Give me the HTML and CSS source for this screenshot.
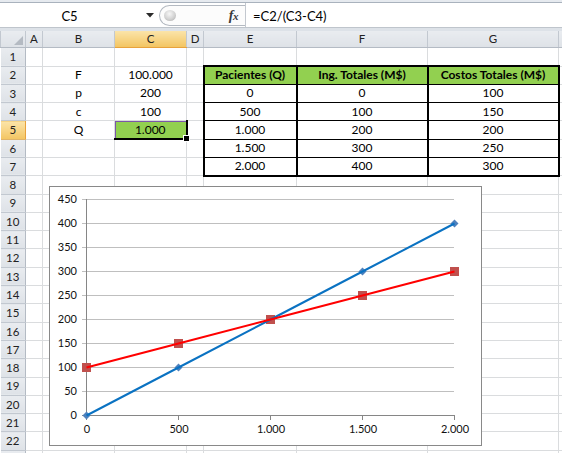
FILE: index.html
```html
<!DOCTYPE html>
<html lang="es">
<head>
<meta charset="utf-8">
<title>Punto de equilibrio</title>
<link rel="stylesheet" href="styles.css">
</head>
<body>
<div class="ribbon-edge"></div>
<div class="fbar">
  <div class="namebox">
    <span class="ref">C5</span>
    <svg class="dd" width="8" height="5" viewBox="0 0 8 5"><path d="M0 0H8L4 4.5Z" fill="#2b2b2b"/></svg>
  </div>
  <div class="fxzone">
    <span class="knob"></span>
    <span class="fx">f<span class="fxx">x</span></span>
  </div>
  <div class="formula">=C2/(C3-C4)</div>
</div>
<div class="gap"></div>

<table class="grid">
  <colgroup>
    <col class="w-rh"><col class="w-a"><col class="w-b"><col class="w-b"><col class="w-a"><col class="w-e"><col class="w-f"><col class="w-f"><col class="w-h">
  </colgroup>
  <thead>
    <tr class="hrow">
      <th class="corner"><svg width="9" height="9" viewBox="0 0 9 9"><path d="M9 0V9H0Z" fill="#b4bac2"/></svg></th>
      <th>A</th><th>B</th><th class="hl">C</th><th>D</th><th>E</th><th>F</th><th>G</th><th></th>
    </tr>
  </thead>
  <tbody>
    <tr><th>1</th><td></td><td></td><td></td><td></td><td></td><td></td><td></td><td></td></tr>
    <tr><th>2</th><td></td><td>F</td><td>100.000</td><td></td><td class="t top hd">Pacientes (Q)</td><td class="t top hd">Ing. Totales (M$)</td><td class="t top hd">Costos Totales (M$)</td><td></td></tr>
    <tr><th>3</th><td></td><td>p</td><td>200</td><td></td><td class="t">0</td><td class="t">0</td><td class="t">100</td><td></td></tr>
    <tr><th>4</th><td></td><td>c</td><td>100</td><td></td><td class="t">500</td><td class="t">100</td><td class="t">150</td><td></td></tr>
    <tr><th class="hl">5</th><td></td><td>Q</td><td class="sel">1.000<span class="handle"></span></td><td></td><td class="t">1.000</td><td class="t">200</td><td class="t">200</td><td></td></tr>
    <tr><th>6</th><td></td><td></td><td></td><td></td><td class="t">1.500</td><td class="t">300</td><td class="t">250</td><td></td></tr>
    <tr><th>7</th><td></td><td></td><td></td><td></td><td class="t bot">2.000</td><td class="t bot">400</td><td class="t bot">300</td><td></td></tr>
    <tr><th>8</th><td></td><td></td><td></td><td></td><td></td><td></td><td></td><td></td></tr>
    <tr><th>9</th><td></td><td></td><td></td><td></td><td></td><td></td><td></td><td></td></tr>
    <tr><th>10</th><td></td><td></td><td></td><td></td><td></td><td></td><td></td><td></td></tr>
    <tr><th>11</th><td></td><td></td><td></td><td></td><td></td><td></td><td></td><td></td></tr>
    <tr><th>12</th><td></td><td></td><td></td><td></td><td></td><td></td><td></td><td></td></tr>
    <tr><th>13</th><td></td><td></td><td></td><td></td><td></td><td></td><td></td><td></td></tr>
    <tr><th>14</th><td></td><td></td><td></td><td></td><td></td><td></td><td></td><td></td></tr>
    <tr><th>15</th><td></td><td></td><td></td><td></td><td></td><td></td><td></td><td></td></tr>
    <tr><th>16</th><td></td><td></td><td></td><td></td><td></td><td></td><td></td><td></td></tr>
    <tr><th>17</th><td></td><td></td><td></td><td></td><td></td><td></td><td></td><td></td></tr>
    <tr><th>18</th><td></td><td></td><td></td><td></td><td></td><td></td><td></td><td></td></tr>
    <tr><th>19</th><td></td><td></td><td></td><td></td><td></td><td></td><td></td><td></td></tr>
    <tr><th>20</th><td></td><td></td><td></td><td></td><td></td><td></td><td></td><td></td></tr>
    <tr><th>21</th><td></td><td></td><td></td><td></td><td></td><td></td><td></td><td></td></tr>
    <tr><th>22</th><td></td><td></td><td></td><td></td><td></td><td></td><td></td><td></td></tr>
    <tr><th></th><td></td><td></td><td></td><td></td><td></td><td></td><td></td><td></td></tr>
  </tbody>
</table>

<div class="chart">
  <svg width="431" height="258" viewBox="0 0 431 258">
    <g class="grid-lines" stroke="#bfbfbf" stroke-width="1">
      <path d="M32 12.5H404M32 36.5H404M32 60.5H404M32 84.5H404M32 108.5H404M32 132.5H404M32 156.5H404M32 180.5H404M32 204.5H404"/>
    </g>
    <g stroke="#868686" stroke-width="1">
      <path d="M36.5 12V229M32 228.5H404.5"/>
      <path d="M32 228.5H36M36.5 228V233M128.5 228V233M220.5 228V233M312.5 228V233M404.5 228V233"/>
    </g>
    <g class="ylab" text-anchor="end">
      <text x="27" y="16">450</text>
      <text x="27" y="40">400</text>
      <text x="27" y="64">350</text>
      <text x="27" y="88">300</text>
      <text x="27" y="112">250</text>
      <text x="27" y="136">200</text>
      <text x="27" y="160">150</text>
      <text x="27" y="184">100</text>
      <text x="27" y="208">50</text>
      <text x="27" y="232">0</text>
    </g>
    <g class="xlab" text-anchor="middle">
      <text x="37" y="246">0</text>
      <text x="129" y="246">500</text>
      <text x="221" y="246">1.000</text>
      <text x="313" y="246">1.500</text>
      <text x="405" y="246">2.000</text>
    </g>
    <g fill="#4f81bd">
      <path d="M36.5 224.5L40.5 228.5L36.5 232.5L32.5 228.5Z"/>
      <path d="M128.5 176.5L132.5 180.5L128.5 184.5L124.5 180.5Z"/>
      <path d="M220.5 128.5L224.5 132.5L220.5 136.5L216.5 132.5Z"/>
      <path d="M312.5 80.5L316.5 84.5L312.5 88.5L308.5 84.5Z"/>
      <path d="M404.5 32.5L408.5 36.5L404.5 40.5L400.5 36.5Z"/>
    </g>
    <g fill="#c0504d">
      <rect x="32" y="176" width="9" height="9"/>
      <rect x="124" y="152" width="9" height="9"/>
      <rect x="216" y="128" width="9" height="9"/>
      <rect x="308" y="104" width="9" height="9"/>
      <rect x="400" y="80" width="9" height="9"/>
    </g>
    <polyline points="36.5,228.5 128.5,180.5 220.5,132.5 312.5,84.5 404.5,36.5" fill="none" stroke="#0a72c2" stroke-width="2"/>
    <polyline points="36.5,180.5 128.5,156.5 220.5,132.5 312.5,108.5 404.5,84.5" fill="none" stroke="#ff0000" stroke-width="2"/>
  </svg>
</div>
</body>
</html>
```

FILE: styles.css
```css
html, body {
  margin: 0;
  height: 453px;
  overflow: hidden;
  background: #ffffff;
}
body {
  position: relative;
  width: 562px;
  font-family: Lato, "Liberation Sans", sans-serif;
  color: #000;
}

.ribbon-edge {
  height: 2px;
  background: #e6eaef;
  border-bottom: 1px solid #a9b2bd;
}

.fbar {
  display: flex;
  height: 25px;
  box-sizing: border-box;
  background: #ffffff;
  border-bottom: 1px solid #bfc5cc;
}
.namebox {
  width: 159px;
  display: flex;
  align-items: center;
}
.namebox .ref {
  width: 139px;
  text-align: center;
  font-size: 13px;
  padding-top: 1px;
}
.dd {
  margin-left: 7px;
  margin-top: 1px;
}
.fxzone {
  width: 86px;
  box-sizing: border-box;
  margin: 2px 0 1px;
  border: 1px solid #b3b9c1;
  border-right: 0;
  border-radius: 11px 0 0 11px;
  display: flex;
  align-items: center;
  justify-content: space-between;
  padding: 0 7px 0 4px;
  background: #fcfcfc;
}
.knob {
  width: 12px;
  height: 11px;
  border-radius: 50%;
  background: radial-gradient(circle at 45% 35%, #f6f6f6 0%, #d2d2d2 55%, #a7a7a7 100%);
}
.fx {
  font: italic bold 14px "Liberation Serif", serif;
  color: #3a3a3a;
  letter-spacing: -0.5px;
}
.fxx {
  font-size: 11px;
}
.formula {
  flex: 1;
  border-left: 1px solid #c3c8cf;
  padding-left: 7px;
  font-size: 13px;
  display: flex;
  align-items: center;
  padding-top: 1px;
}

.gap {
  height: 3px;
  background: #dde2e8;
}

.grid {
  border-collapse: collapse;
  table-layout: fixed;
  width: 629px;
  font-size: 12px;
}
.w-rh { width: 25px; }
.w-a { width: 17px; }
.w-b { width: 72px; }
.w-e { width: 93px; }
.w-f { width: 131px; }
.w-h { width: 72px; }

.grid th {
  font-weight: normal;
  font-size: 11.5px;
  color: #222;
  background: linear-gradient(#e9ecf0, #dee2e7);
  border: 1px solid #c2c8d0;
  padding: 0;
  line-height: 1;
  text-align: center;
}
.grid thead th {
  border-top: 0;
  border-bottom: 1px solid #b4bbc4;
}
.grid tbody th {
  border-left: 0;
  border-right: 1px solid #b4bbc4;
}
.hrow { height: 16px; }
.grid tbody tr { height: 18.3px; }
.grid tbody tr:first-child { height: 19px; }

.grid th.hl {
  background: linear-gradient(#fbe4a9, #f3c562);
  border-bottom-color: #e8a23c;
}
.grid tbody th.hl {
  border-bottom-color: #e0b46a;
  border-right-color: #e8a23c;
}
.corner {
  text-align: right;
  vertical-align: bottom;
}
.corner svg {
  display: block;
  margin: 0 2px 2px auto;
}

.grid td {
  border: 1px solid #dadcde;
  padding: 0;
  text-align: center;
  vertical-align: middle;
  line-height: 1;
  white-space: nowrap;
  overflow: visible;
}
.grid td.t {
  border-top: 1px solid #000;
  border-bottom: 1px solid #000;
  border-left: 2px solid #000;
  border-right: 2px solid #000;
}
.grid td.top { border-top: 2px solid #000; }
.grid td.bot { border-bottom: 2px solid #000; }
.grid td.hd {
  background: #92d050;
  font-weight: bold;
}
.grid td.sel {
  position: relative;
  background: #92d050;
  border-right: 2px solid #000;
  border-bottom: 2px solid #000;
  box-shadow: inset 1px 1px 0 #7b57a8;
}
.handle {
  position: absolute;
  right: -4px;
  bottom: -4px;
  width: 5px;
  height: 5px;
  background: #000;
  border: 1px solid #fff;
}

.chart {
  position: absolute;
  left: 49px;
  top: 186px;
  width: 433px;
  height: 260px;
  box-sizing: border-box;
  border: 1px solid #898989;
  background: #ffffff;
}
.chart svg {
  display: block;
  font-family: Lato, "Liberation Sans", sans-serif;
  font-size: 11px;
}
.chart text {
  fill: #111;
}
```
